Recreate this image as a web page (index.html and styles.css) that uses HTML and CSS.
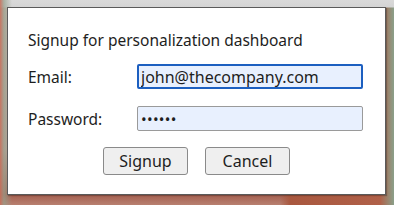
FILE: index.html
```html
<!DOCTYPE html>
<html>
<head>
<meta charset="utf-8">
<link rel="stylesheet" href="styles.css">
</head>
<body>
<div class="backdrop">
  <form class="dialog">
    <div class="title">Signup for personalization dashboard</div>
    <div class="row row-email">
      <label class="label" for="email">Email:</label>
      <input class="field field-focus" id="email" type="text" value="john@thecompany.com">
    </div>
    <div class="row row-pass">
      <label class="label" for="pass">Password:</label>
      <input class="field field-pass" id="pass" type="password" value="secret">
    </div>
    <div class="actions">
      <button type="button" class="btn">Signup</button>
      <button type="button" class="btn">Cancel</button>
    </div>
  </form>
</div>
</body>
</html>
```
FILE: styles.css
```css
html, body {
  margin: 0;
  padding: 0;
}
body {
  width: 394px;
  height: 205px;
  overflow: hidden;
  font-family: "Noto Sans", "DejaVu Sans", sans-serif;
}
.backdrop {
  width: 394px;
  height: 205px;
  box-sizing: border-box;
  padding: 7px 8px 10px 7px;
  background:
    linear-gradient(90deg, rgba(200,110,90,0.9) 0px, rgba(150,160,140,0.7) 4px, rgba(0,0,0,0) 12px),
    linear-gradient(180deg, #d9d9d9 0px, #d4d4d4 7px, rgba(0,0,0,0) 8px),
    linear-gradient(90deg, rgba(0,0,0,0) 280px, #a9583f 290px, #b06048 380px, #8aa08a 394px),
    linear-gradient(180deg, #c9b8b0 0px, #c0a098 150px, #a56050 195px, #b88070 205px);
}
.dialog {
  box-sizing: border-box;
  width: 379px;
  height: 188px;
  margin: 0;
  background: #ffffff;
  border: 1px solid #5a5a5a;
  box-shadow: 1px 1px 1px rgba(0,0,0,0.25);
  padding: 22px 22px 0 20px;
  display: flex;
  flex-direction: column;
  color: #1e1e1e;
  font-size: 15.5px;
}
.title {
  line-height: 20px;
  height: 20px;
}
.row {
  display: grid;
  grid-template-columns: 109px 1fr;
  align-items: center;
  height: 25px;
}
.row-email {
  margin-top: 14px;
}
.row-pass {
  margin-top: 17px;
}
.label {
  line-height: 20px;
}
.field {
  box-sizing: border-box;
  width: 226px;
  height: 25px;
  margin: 0;
  padding: 0 3px;
  font-family: "Noto Sans", "DejaVu Sans", sans-serif;
  font-size: 16px;
  color: #1e1e1e;
  background: #e8f0fe;
  border: 1px solid #9a9a9a;
  border-radius: 2px;
  outline: none;
}
.field-pass {
  font-size: 15px;
  letter-spacing: 0.3px;
}
.field-focus {
  border: 2px solid #1c5fc0;
  padding: 0 2px;
}
.actions {
  margin-top: 16px;
  display: flex;
  justify-content: center;
  gap: 17px;
  padding-left: 2px;
}
.btn {
  box-sizing: border-box;
  width: 85px;
  height: 28px;
  margin: 0;
  padding: 0;
  font-family: "Noto Sans", "DejaVu Sans", sans-serif;
  font-size: 16px;
  color: #1e1e1e;
  background: #efefef;
  border: 1px solid #8a8a8a;
  border-radius: 3px;
}
```
